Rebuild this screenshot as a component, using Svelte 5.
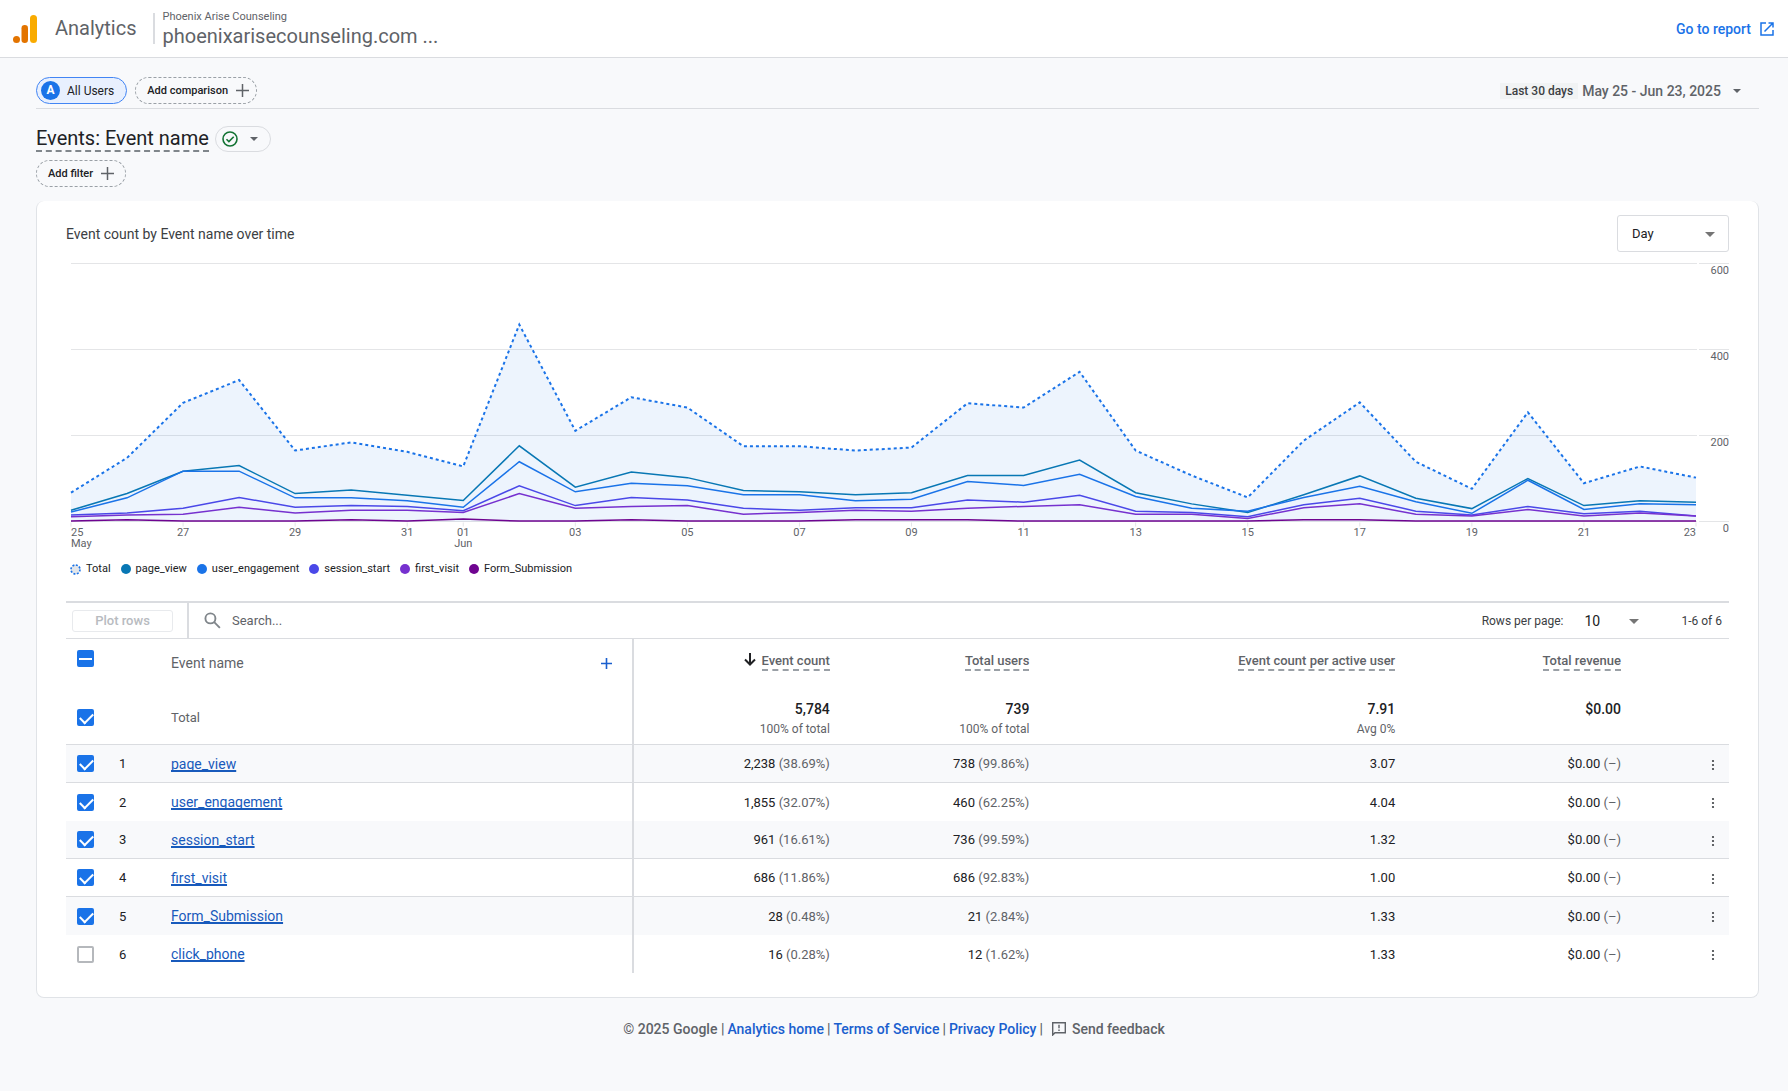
<script lang="ts">
  const days = [
    '25', '26', '27', '28', '29', '30', '31', '01', '02', '03', '04', '05', '06', '07', '08',
    '09', '10', '11', '12', '13', '14', '15', '16', '17', '18', '19', '20', '21', '22', '23'
  ];
  const ticks = ['25', '27', '29', '31', '01', '03', '05', '07', '09', '11', '13', '15', '17', '19', '21', '23'];
  const months: Record<string, string> = { '25': 'May', '01': 'Jun' };

  const total = [
    67, 148, 276, 329, 165, 184, 162, 128, 458, 211, 289, 265, 175, 175, 165,
    172, 275, 265, 348, 165, 107, 56, 188, 277, 139, 76, 254, 89, 128, 102
  ];

  const series = [
    {
      name: 'page_view',
      color: '#0877b4',
      values: [26, 65, 117, 130, 65, 73, 61, 49, 176, 80, 115, 102, 72, 69, 62, 67, 107, 107, 143, 67, 41, 21, 62, 106, 54, 30, 100, 37, 48, 45]
    },
    {
      name: 'user_engagement',
      color: '#1a73e8',
      values: [22, 55, 117, 117, 55, 55, 48, 33, 139, 69, 89, 83, 62, 62, 48, 52, 93, 84, 110, 58, 31, 24, 56, 82, 46, 19, 96, 28, 41, 39]
    },
    {
      name: 'session_start',
      color: '#4a48e8',
      values: [15, 20, 31, 56, 33, 37, 35, 25, 83, 37, 56, 50, 31, 26, 32, 32, 50, 45, 61, 24, 21, 11, 39, 54, 24, 15, 35, 18, 24, 13]
    },
    {
      name: 'first_visit',
      color: '#7631cf',
      values: [11, 15, 17, 33, 20, 26, 26, 21, 65, 31, 35, 37, 17, 21, 26, 24, 31, 35, 39, 17, 17, 7, 32, 41, 17, 13, 28, 13, 20, 13]
    },
    {
      name: 'Form_Submission',
      color: '#6f0490',
      values: [1, 4, 1, 1, 1, 4, 1, 6, 1, 1, 4, 1, 1, 1, 4, 4, 4, 1, 1, 1, 1, 1, 4, 4, 1, 1, 1, 1, 1, 1]
    }
  ];

  let rows = $state([
    { name: 'page_view', checked: true, shaded: true, line: true, count: '2,238', countPct: '38.69%', users: '738', usersPct: '99.86%', perUser: '3.07' },
    { name: 'user_engagement', checked: true, shaded: false, line: false, count: '1,855', countPct: '32.07%', users: '460', usersPct: '62.25%', perUser: '4.04' },
    { name: 'session_start', checked: true, shaded: true, line: true, count: '961', countPct: '16.61%', users: '736', usersPct: '99.59%', perUser: '1.32' },
    { name: 'first_visit', checked: true, shaded: false, line: true, count: '686', countPct: '11.86%', users: '686', usersPct: '92.83%', perUser: '1.00' },
    { name: 'Form_Submission', checked: true, shaded: true, line: false, count: '28', countPct: '0.48%', users: '21', usersPct: '2.84%', perUser: '1.33' },
    { name: 'click_phone', checked: false, shaded: false, line: false, count: '16', countPct: '0.28%', users: '12', usersPct: '1.62%', perUser: '1.33' }
  ]);

  let search = $state('');
  let totalChecked = $state(true);

  // chart geometry
  const left = 5;
  const axisWidth = 33;
  const base = 259.5;
  let width = $state(1663);
  const right = $derived(width - axisWidth);

  function x(i: number) {
    return left + (i * (right - left)) / (days.length - 1);
  }

  function y(value: number) {
    return base - value * 0.43;
  }

  function points(values: number[]) {
    return values.map((v, i) => `${x(i)},${y(v)}`).join(' ');
  }

  function anchor(i: number) {
    if (i === 0) return 'start';
    return i === days.length - 1 ? 'end' : 'middle';
  }
</script>

<header class="topbar">
  <svg class="logo" width="26" height="30" viewBox="0 0 26 30" aria-hidden="true">
    <rect x="18" y="1" width="7" height="28" rx="3.5" fill="#f9ab00" />
    <rect x="9.5" y="11" width="6.5" height="18" rx="3.2" fill="#e37400" />
    <circle cx="4.5" cy="25.5" r="3.5" fill="#e37400" />
  </svg>
  <span class="product">Analytics</span>
  <div class="property">
    <span class="account">Phoenix Arise Counseling</span>
    <span class="domain">phoenixarisecounseling.com ...</span>
  </div>
  <a class="report-link" href="#report">
    Go to report
    <svg width="14" height="14" viewBox="0 0 14 14" fill="none" stroke="currentColor" stroke-width="1.5">
      <path d="M6 1H1v12h12V8M8.5 1H13v4.500M13 1 4.500 9.500" />
    </svg>
  </a>
</header>

<main>
  <div class="comparisons">
    <button class="chip users"><span class="badge">A</span>All Users</button>
    <button class="chip dashed">
      Add comparison
      <svg width="13" height="13" viewBox="0 0 13 13" stroke="#5f6368" stroke-width="1.5"><path d="M6.5 0v13M0 6.500h13" /></svg>
    </button>
    <button class="date">
      <span class="preset">Last 30 days</span>
      May 25 - Jun 23, 2025
      <svg width="8" height="4" viewBox="0 0 8 4" fill="#5f6368"><path d="M0 0h8L4 4z" /></svg>
    </button>
  </div>

  <div class="title-row">
    <h1>Events: Event name</h1>
    <button class="status" aria-label="Data quality">
      <svg width="16" height="16" viewBox="0 0 16 16" fill="none" stroke="#137333" stroke-width="1.6">
        <circle cx="8" cy="8" r="7" />
        <path d="m4.5 8.2 2.4 2.4 4.8-4.900" />
      </svg>
      <svg width="8" height="4" viewBox="0 0 8 4" fill="#5f6368"><path d="M0 0h8L4 4z" /></svg>
    </button>
  </div>

  <button class="chip dashed filter">
    Add filter
    <svg width="13" height="13" viewBox="0 0 13 13" stroke="#5f6368" stroke-width="1.5"><path d="M6.5 0v13M0 6.500h13" /></svg>
  </button>

  <section class="card">
    <div class="chart-head">
      <h2>Event count by Event name over time</h2>
      <div class="select interval">
        <select aria-label="Interval">
          <option>Day</option>
          <option>Week</option>
          <option>Month</option>
        </select>
      </div>
    </div>

    <div class="chart" bind:clientWidth={width}>
      <svg width="100%" height="290">
        {#each [600, 400, 200, 0] as value}
          <line class="grid" x1={left} x2={right + 1} y1={y(value)} y2={y(value)} />
          <line class="grid" x1={right + 3} x2={width} y1={y(value)} y2={y(value)} />
          <text x={width} y={y(value) + 10} text-anchor="end">{value}</text>
        {/each}
        <polygon class="area" points={`${left},${base} ${points(total)} ${right},${base}`} />
        {#each series as s}
          <polyline points={points(s.values)} fill="none" stroke={s.color} stroke-width="1.5" />
        {/each}
        <polyline class="total" points={points(total)} />
        {#each ticks as tick}
          {@const i = days.indexOf(tick)}
          <line class="grid" x1={x(i)} x2={x(i)} y1={base + 1} y2={base + 5} />
          <text x={x(i)} y={base + 14} text-anchor={anchor(i)}>{tick}</text>
          {#if months[tick]}
            <text x={x(i)} y={base + 25} text-anchor={anchor(i)}>{months[tick]}</text>
          {/if}
        {/each}
      </svg>
    </div>

    <ul class="legend">
      <li>
        <svg width="11" height="11" viewBox="0 0 11 11"><circle cx="5.5" cy="5.5" r="4.5" fill="#e3e6ea" stroke="#1a73e8" stroke-width="1.6" stroke-dasharray="2 1.5" /></svg>
        Total
      </li>
      {#each series as s}
        <li><svg width="10" height="10" viewBox="0 0 10 10"><circle cx="5" cy="5" r="5" fill={s.color} /></svg>{s.name}</li>
      {/each}
    </ul>

    <div class="toolbar">
      <div class="plot"><button disabled>Plot rows</button></div>
      <label class="search">
        <svg width="17" height="17" viewBox="0 0 18 18" fill="none" stroke="#80868b" stroke-width="2">
          <circle cx="6.8" cy="6.8" r="5.3" />
          <path d="m10.8 10.8 6 6" />
        </svg>
        <input type="text" placeholder="Search..." aria-label="Search" bind:value={search} />
      </label>
      <label for="page-size">Rows per page:</label>
      <div class="select page-size">
        <select id="page-size">
          <option>10</option>
          <option>25</option>
          <option>50</option>
        </select>
      </div>
      <span>1-6 of 6</span>
    </div>

    <table>
      <colgroup>
        <col class="c-check" />
        <col class="c-index" />
        <col class="c-name" />
        <col class="c-count" />
        <col class="c-users" />
        <col class="c-per" />
        <col />
        <col class="c-more" />
      </colgroup>
      <thead>
        <tr class="head">
          <th class="check"><input type="checkbox" aria-label="Select all" indeterminate={true} /></th>
          <th></th>
          <th class="name">
            <div class="name-head">
              Event name
              <button class="add" aria-label="Add dimension">
                <svg width="11" height="11" viewBox="0 0 11 11" stroke="#1a5fce" stroke-width="1.6"><path d="M5.5 0v11M0 5.500h11" /></svg>
              </button>
            </div>
          </th>
          <th class="num">
            <svg class="sort" width="12" height="13" viewBox="0 0 12 13" fill="none" stroke="#202124" stroke-width="2"><path d="M6 0v11.500M1 6.500l5 5 5-5" /></svg>
            <span class="metric">Event count</span>
          </th>
          <th class="num"><span class="metric">Total users</span></th>
          <th class="num"><span class="metric">Event count per active user</span></th>
          <th class="num"><span class="metric">Total revenue</span></th>
          <th></th>
        </tr>
        <tr class="totals">
          <td class="check"><input type="checkbox" aria-label="Total" bind:checked={totalChecked} /></td>
          <td></td>
          <td class="name">Total</td>
          <td class="num"><strong>5,784</strong><small>100% of total</small></td>
          <td class="num"><strong>739</strong><small>100% of total</small></td>
          <td class="num"><strong>7.91</strong><small>Avg 0%</small></td>
          <td class="num"><strong>$0.00</strong></td>
          <td></td>
        </tr>
      </thead>
      <tbody>
        {#each rows as row, i}
          <tr class:shaded={row.shaded} class:line={row.line}>
            <td class="check"><input type="checkbox" aria-label={row.name} bind:checked={row.checked} /></td>
            <td class="index">{i + 1}</td>
            <td class="name"><a href="#{row.name}">{row.name}</a></td>
            <td class="num">{row.count} <span>({row.countPct})</span></td>
            <td class="num">{row.users} <span>({row.usersPct})</span></td>
            <td class="num">{row.perUser}</td>
            <td class="num">$0.00 <span>(–)</span></td>
            <td class="more">
              <button aria-label="Row menu">
                <svg width="4" height="12" viewBox="0 0 4 12" fill="#3c4043"><circle cx="2" cy="2" r="1.1" /><circle cx="2" cy="6" r="1.1" /><circle cx="2" cy="10" r="1.1" /></svg>
              </button>
            </td>
          </tr>
        {/each}
      </tbody>
    </table>
  </section>
</main>

<footer>
  <span>© 2025 Google |</span>
  <a href="#home">Analytics home</a>
  <span>|</span>
  <a href="#terms">Terms of Service</a>
  <span>|</span>
  <a href="#privacy">Privacy Policy</a>
  <span>|</span>
  <button class="feedback">
    <svg width="14" height="14" viewBox="0 0 14 14" fill="none" stroke="currentColor" stroke-width="1.4">
      <path d="M0.700 13V0.700h12.600v10H3L0.700 13z" />
      <path d="M7 2.800v3.400M7 7.600v1.500" />
    </svg>
    Send feedback
  </button>
</footer>

<style>
  :global(body) {
    background: #f8f9fb;
    color: #202124;
    font-family: Roboto, Arial, sans-serif;
    font-size: 13px;
  }

  button,
  input,
  select {
    font: inherit;
    color: inherit;
    padding: 0;
    border: none;
    background: none;
  }

  button {
    cursor: pointer;
  }

  a {
    color: #1a5fce;
    text-decoration: none;
  }

  svg {
    flex: none;
  }

  .topbar {
    display: flex;
    align-items: center;
    height: 57px;
    padding: 0 14px 0 12px;
    background: #fff;
    border-bottom: 1px solid #dadce0;
    color: #5f6368;
  }

  .product {
    margin-left: 17px;
    padding-right: 16px;
    font-size: 20px;
    line-height: 31px;
    border-right: 2px solid #dadce0;
  }

  .property {
    display: flex;
    flex-direction: column;
    margin-left: 8px;
  }

  .account {
    font-size: 11px;
    line-height: 15px;
  }

  .domain {
    font-size: 20px;
    line-height: 25px;
  }

  .report-link {
    display: flex;
    align-items: center;
    gap: 9px;
    margin-left: auto;
    color: #1a73e8;
    font-size: 14px;
    font-weight: 500;
  }

  main {
    padding: 19px 29px 0 36px;
  }

  .comparisons {
    display: flex;
    align-items: center;
    gap: 8px;
    padding-bottom: 4px;
    border-bottom: 1px solid #dadce0;
  }

  .chip {
    display: flex;
    align-items: center;
    gap: 8px;
    height: 27px;
    padding: 0 7px 0 11px;
    border-radius: 14px;
    font-size: 11px;
    font-weight: 500;
  }

  .dashed {
    border: 1px dashed #9aa0a6;
  }

  .filter {
    padding-right: 11px;
  }

  .users {
    gap: 7px;
    padding: 0 12px 0 4px;
    border: 1px solid #4285f4;
    background: #e8f0fe;
    font-size: 12px;
    font-weight: 400;
  }

  .badge {
    width: 19px;
    line-height: 19px;
    border-radius: 50%;
    background: #1a73e8;
    color: #fff;
    font-weight: 700;
    text-align: center;
  }

  .date {
    display: flex;
    align-items: center;
    margin-left: auto;
    padding-right: 18px;
    color: #5f6368;
    font-size: 14px;
    font-weight: 500;
  }

  .date svg {
    margin-left: 12px;
  }

  .preset {
    margin-right: 4px;
    padding: 0 5px;
    background: #f1f3f4;
    color: #3c4043;
    font-size: 12px;
    line-height: 16px;
  }

  .title-row {
    display: flex;
    align-items: flex-start;
    gap: 6px;
    padding: 17px 0 8px;
  }

  h1 {
    margin: 0;
    font-size: 20px;
    font-weight: 400;
    line-height: 24px;
    border-bottom: 2px dashed #80868b;
  }

  .status {
    display: flex;
    align-items: center;
    gap: 12px;
    height: 26px;
    padding: 0 12px 0 6px;
    border: 1px solid #dadce0;
    border-radius: 13px;
  }

  .card {
    margin-top: 14px;
    padding: 14px 29px 24px;
    background: #fff;
    border: 1px solid #e0e3e7;
    border-top: none;
    border-radius: 8px;
  }

  .chart-head {
    display: flex;
    align-items: center;
    justify-content: space-between;
  }

  h2 {
    margin: 0;
    font-size: 14px;
    font-weight: 400;
    color: #3c4043;
  }

  .select {
    position: relative;
  }

  .select::after {
    content: '';
    position: absolute;
    top: 50%;
    right: 14px;
    margin-top: -2px;
    border: 5px solid transparent;
    border-top-color: #757575;
    border-bottom: none;
    pointer-events: none;
  }

  select {
    width: 100%;
    height: 100%;
    appearance: none;
  }

  .interval {
    width: 112px;
    height: 37px;
  }

  .interval select {
    padding-left: 14px;
    border: 1px solid #dadce0;
    border-radius: 3px;
  }

  .chart {
    margin-top: 10px;
  }

  .chart svg {
    display: block;
  }

  .chart text {
    font-size: 11px;
    fill: #5f6368;
  }

  .grid {
    stroke: #e4e5e7;
  }

  .area {
    fill: #1a73e8;
    fill-opacity: 0.08;
  }

  .total {
    fill: none;
    stroke: #1a73e8;
    stroke-width: 2;
    stroke-dasharray: 3 3;
  }

  .legend {
    display: flex;
    gap: 10px;
    margin: 9px 0 24px;
    padding: 0 0 0 4px;
    list-style: none;
    font-size: 11px;
    line-height: 16px;
  }

  .legend li {
    display: flex;
    align-items: center;
    gap: 5px;
  }

  .toolbar {
    display: flex;
    align-items: center;
    height: 35px;
    padding-right: 7px;
    border-top: 2px solid #dadce0;
    border-bottom: 1px solid #dadce0;
    font-size: 12px;
    color: #3c4043;
  }

  .plot {
    display: flex;
    align-items: center;
    height: 100%;
    padding: 0 14px 0 6px;
    border-right: 2px solid #dadce0;
  }

  .plot button {
    width: 101px;
    height: 22px;
    border: 1px solid #e8eaed;
    border-radius: 3px;
    color: #b8bbbf;
    font-size: 13px;
    font-weight: 500;
  }

  .search {
    display: flex;
    flex: 1;
    align-items: center;
    gap: 11px;
    padding-left: 15px;
  }

  .search input {
    flex: 1;
    outline: none;
    font-size: 13px;
  }

  .search input::placeholder {
    color: #5f6368;
  }

  .page-size {
    width: 55px;
    height: 24px;
    margin: 0 42px 0 21px;
    color: #202124;
    font-size: 14px;
  }

  .page-size::after {
    right: 0;
  }

  table {
    width: 100%;
    table-layout: fixed;
    border-spacing: 0;
  }

  .c-check {
    width: 46px;
  }

  .c-index {
    width: 59px;
  }

  .c-name {
    width: 463px;
  }

  .c-count {
    width: 14%;
  }

  .c-users {
    width: 12%;
  }

  .c-per {
    width: 22%;
  }

  .c-more {
    width: 71px;
  }

  th,
  td {
    padding: 0;
    text-align: left;
    font-weight: 400;
  }

  .name {
    border-right: 2px solid #dadce0;
  }

  .num {
    padding-right: 37px;
    text-align: right;
  }

  .head {
    height: 51px;
    color: #5f6368;
  }

  .head th {
    vertical-align: top;
    padding-top: 11px;
  }

  .head th.name,
  .head th.num {
    padding-top: 14px;
  }

  .head th.name {
    padding-top: 16px;
  }

  .name-head {
    display: flex;
    align-items: center;
    justify-content: space-between;
    padding-right: 20px;
    font-size: 14px;
  }

  .add svg {
    display: block;
  }

  .metric {
    display: inline-block;
    padding-bottom: 1px;
    border-bottom: 2px dashed #9aa0a6;
    font-weight: 500;
  }

  .sort {
    margin-right: 2px;
    vertical-align: -1px;
  }

  .totals td {
    height: 55px;
    border-bottom: 1px solid #dadce0;
    color: #5f6368;
  }

  .totals .num {
    vertical-align: top;
    padding-top: 11px;
    height: 44px;
  }

  strong {
    display: block;
    color: #202124;
    font-size: 14px;
    font-weight: 500;
    line-height: 16px;
  }

  small {
    display: block;
    margin-top: 4px;
    font-size: 12px;
    line-height: 16px;
  }

  tbody td {
    height: 38px;
  }

  .shaded {
    background: #f8f9fb;
  }

  .line td {
    border-bottom: 1px solid #dadce0;
  }

  .index {
    padding-left: 7px;
  }

  .name a {
    color: #185abc;
    font-size: 14px;
    text-decoration: underline;
    text-decoration-thickness: 2px;
    text-underline-offset: 1px;
    text-decoration-skip-ink: none;
  }

  td.num span {
    color: #5f6368;
  }

  .check {
    padding-left: 11px;
  }

  .more {
    padding-right: 14px;
    text-align: right;
  }

  .more button {
    vertical-align: middle;
  }

  .more svg {
    display: block;
  }

  input[type='checkbox'] {
    display: block;
    position: relative;
    width: 17px;
    height: 17px;
    margin: 0;
    appearance: none;
    border: 2px solid #b5b8bc;
    border-radius: 2px;
  }

  input[type='checkbox']:checked,
  input[type='checkbox']:indeterminate {
    border-color: #1a73e8;
    background: #1a73e8;
  }

  input[type='checkbox']:checked::after {
    content: '';
    position: absolute;
    top: 2px;
    left: 1px;
    width: 11px;
    height: 6px;
    border-left: 2px solid #fff;
    border-bottom: 2px solid #fff;
    transform: rotate(-45deg);
  }

  input[type='checkbox']:indeterminate::after {
    content: '';
    position: absolute;
    top: 6px;
    left: 0;
    right: 0;
    height: 2px;
    background: #fff;
  }

  footer {
    display: flex;
    align-items: center;
    justify-content: center;
    gap: 3px;
    padding: 22px 0;
    color: #5f6368;
    font-size: 14px;
    font-weight: 500;
    line-height: 18px;
  }

  .feedback {
    display: flex;
    align-items: center;
    gap: 6px;
    margin-left: 6px;
  }

  * {
    box-sizing: border-box;
  }

  .topbar,
  .toolbar {
    box-sizing: content-box;
  }
</style>
